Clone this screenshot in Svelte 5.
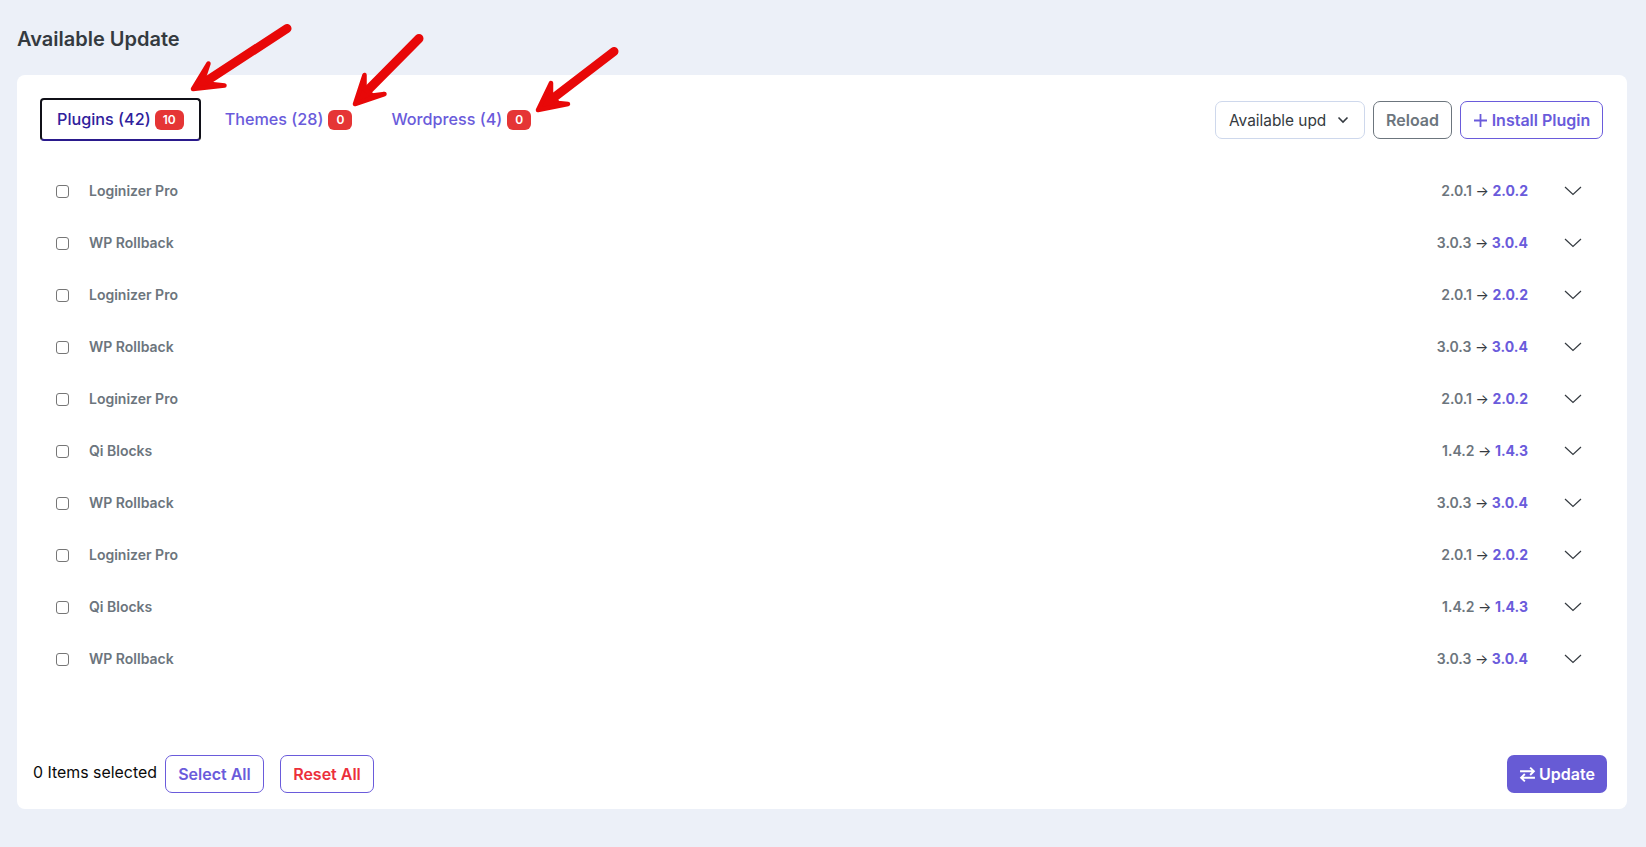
<script>
  const rows = [
    { name: 'Loginizer Pro', from: '2.0.1', to: '2.0.2' },
    { name: 'WP Rollback', from: '3.0.3', to: '3.0.4' },
    { name: 'Loginizer Pro', from: '2.0.1', to: '2.0.2' },
    { name: 'WP Rollback', from: '3.0.3', to: '3.0.4' },
    { name: 'Loginizer Pro', from: '2.0.1', to: '2.0.2' },
    { name: 'Qi Blocks', from: '1.4.2', to: '1.4.3' },
    { name: 'WP Rollback', from: '3.0.3', to: '3.0.4' },
    { name: 'Loginizer Pro', from: '2.0.1', to: '2.0.2' },
    { name: 'Qi Blocks', from: '1.4.2', to: '1.4.3' },
    { name: 'WP Rollback', from: '3.0.3', to: '3.0.4' }
  ];

  const tabs = [
    { label: 'Plugins (42)', count: 10, active: true },
    { label: 'Themes (28)', count: 0 },
    { label: 'Wordpress (4)', count: 0 }
  ];

  // annotation arrows drawn over the screenshot
  const arrows = [
    { tail: '287,28.5 205,82', head: '193,89 208.5,63.5 204,77 211,84 224.5,85.5' },
    { tail: '419,38.5 366,92', head: '355,104 364.5,75 364.5,89 372.5,95.5 384.5,94' },
    { tail: '614,51.5 552,99', head: '538,110 551,83 551,95 558,103 568,104' }
  ];
</script>

<div class="page">
  <h1>Available Update</h1>

  <section class="card">
    <div class="toolbar">
      <div class="tabs">
        {#each tabs as tab}
          <button class="tab" class:active={tab.active}>
            <span class="label">{tab.label}</span>
            <span class="badge">{tab.count}</span>
          </button>
        {/each}
      </div>

      <div class="actions">
        <div class="select">
          <span>Available upd</span>
          <svg width="12" height="8" viewBox="0 0 12 8"><path d="M1.5 1.5 6 6l4.5-4.5" fill="none" stroke="#343a40" stroke-width="1.6" /></svg>
        </div>
        <button class="btn reload">Reload</button>
        <button class="btn install">
          <svg width="15" height="15" viewBox="0 0 15 15"><path d="M7.5 1v13M1 7.5h13" fill="none" stroke="currentColor" stroke-width="1.8" /></svg>
          Install Plugin
        </button>
      </div>
    </div>

    <ul class="list">
      {#each rows as row}
        <li class="row">
          <span class="check"></span>
          <span class="name">{row.name}</span>
          <span class="version">{row.from} <span class="arrow">→</span> <b>{row.to}</b></span>
          <svg class="chev" width="18" height="10" viewBox="0 0 18 10"><path d="M1 1l8 7.5L17 1" fill="none" stroke="#343a40" stroke-width="1.2" /></svg>
        </li>
      {/each}
    </ul>

    <div class="footer">
      <span class="selected">0 Items selected</span>
      <button class="btn select-all">Select All</button>
      <button class="btn reset-all">Reset All</button>
      <button class="btn update">
        <svg width="17" height="17" viewBox="0 0 16 16"><path d="M1 5h13M10.5 1.5 14 5l-3.5 3.5M15 11H2M5.5 7.5 2 11l3.5 3.5" fill="none" stroke="currentColor" stroke-width="1.8" /></svg>
        Update
      </button>
    </div>
  </section>

  <svg class="marks" width="1646" height="847" viewBox="0 0 1646 847">
    {#each arrows as a}
      <polyline points={a.tail} fill="none" stroke="#e80808" stroke-width="9" stroke-linecap="round" />
      <polygon points={a.head} fill="#e80808" stroke="#e80808" stroke-width="4.5" stroke-linejoin="round" />
    {/each}
  </svg>
</div>

<style>
  :global(body) {
    margin: 0;
    background: #ecf0f8;
    font-family: Inter, "Liberation Sans", sans-serif;
  }

  .page {
    position: relative;
    height: 847px;
    padding: 27px 19px 0 17px;
    box-sizing: border-box;
    overflow: hidden;
  }

  h1 {
    margin: 0 0 24px;
    font-size: 20px;
    line-height: 24px;
    font-weight: 600;
    color: #343a40;
  }

  .card {
    height: 734px;
    box-sizing: border-box;
    padding: 23px 24px 16px 23px;
    background: #fff;
    border-radius: 8px;
    display: flex;
    flex-direction: column;
  }

  .toolbar {
    display: flex;
    justify-content: space-between;
    align-items: flex-start;
    margin-bottom: 24px;
  }

  .tabs {
    display: flex;
  }

  .tab {
    display: flex;
    align-items: center;
    gap: 5px;
    height: 43px;
    padding: 0 16px;
    margin-right: 7px;
    border: 0;
    border-radius: 4px;
    background: none;
    color: #6a5bdb;
    font: 500 16.2px Inter, sans-serif;
  }

  .tab.active {
    border: 2px solid #101018;
    border-bottom-color: #2a1a8c;
    gap: 4px;
    padding: 0 15px 0 15px;
    margin-right: 8px;
    color: #2f219c;
  }

  .label {
    margin-top: -2px;
  }

  .badge {
    padding: 0 8px;
    height: 20px;
    line-height: 20px;
    margin-top: 1px;
    border-radius: 6px;
    background: #e53535;
    color: #fff;
    font-size: 12px;
    font-weight: 600;
  }

  .actions {
    display: flex;
    gap: 8px;
    margin-top: 3px;
  }

  .select {
    display: flex;
    align-items: center;
    justify-content: space-between;
    width: 150px;
    height: 38px;
    box-sizing: border-box;
    padding: 0 15px 0 13px;
    border: 1px solid #ced8ec;
    border-radius: 7px;
    font-size: 15.4px;
    color: #343a40;
  }

  .btn {
    display: inline-flex;
    align-items: center;
    justify-content: center;
    height: 38px;
    box-sizing: border-box;
    border-radius: 7px;
    background: #fff;
    font: 600 16px Inter, sans-serif;
  }

  .reload {
    width: 79px;
    border: 1px solid #6c757d;
    color: #6c757d;
  }

  .install {
    width: 143px;
    gap: 4px;
    border: 1px solid #6a5bdb;
    color: #6a5bdb;
  }

  .list {
    list-style: none;
    margin: 0;
    padding: 0;
  }

  .row {
    display: flex;
    align-items: center;
    height: 52px;
    padding: 0 21px 0 16px;
    font-size: 14px;
    color: #6c757d;
  }

  .check {
    width: 13px;
    height: 13px;
    box-sizing: border-box;
    border: 1px solid #767676;
    border-radius: 3px;
  }

  .name {
    margin-left: 20px;
    margin-top: -1px;
    font-weight: 600;
  }

  .version {
    margin-left: auto;
    margin-top: -1px;
    font-weight: 600;
  }

  .version b {
    color: #6a5bdb;
    font-weight: 700;
  }

  .arrow {
    color: #343a40;
    font-weight: 400;
  }

  .chev {
    margin-left: 36px;
  }

  .footer {
    margin-top: auto;
    margin-left: -7px;
    display: flex;
    align-items: center;
  }

  .selected {
    font-size: 15.9px;
    color: #0a0a0a;
    margin-right: 8px;
    position: relative;
    top: -2px;
  }

  .select-all {
    width: 99px;
    margin-right: 16px;
    border: 1px solid #6a5bdb;
    color: #6a5bdb;
  }

  .reset-all {
    width: 94px;
    border: 1px solid #6a5bdb;
    color: #ec2f3b;
  }

  .update {
    width: 100px;
    margin-left: auto;
    margin-right: -4px;
    gap: 3px;
    border: 0;
    background: #675bd5;
    color: #fff;
    font-weight: 600;
  }

  .marks {
    position: absolute;
    left: 0;
    top: 0;
    pointer-events: none;
  }
</style>
